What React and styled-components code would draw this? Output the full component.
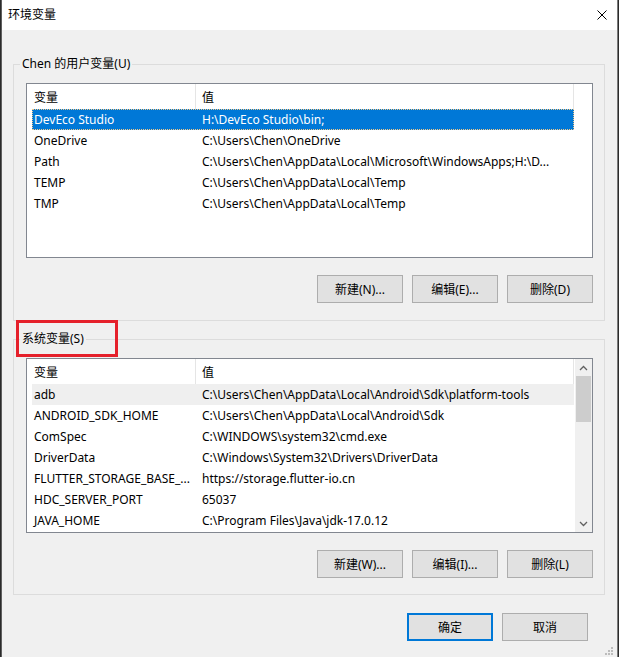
import React from "react";
import styled, { createGlobalStyle, css } from "styled-components";

const GlobalStyle = createGlobalStyle`
  html, body {
    margin: 0;
    padding: 0;
    background: #2b2b2b;
    overflow: hidden;
  }
  body {
    font-family: "Noto Sans", "Noto Sans CJK SC", sans-serif;
    font-size: 12px;
    color: #000;
  }
`;

const Window = styled.div`
  margin-left: 1px;
  width: 615px;
  height: 657px;
  background: #f0f0f0;
  border-left: 1px solid #5f5f5f;
  border-right: 1px solid #7a7a7a;
  display: flex;
  flex-direction: column;
  position: relative;
`;

const TitleBar = styled.div`
  height: 30px;
  background: #fff;
  display: flex;
  align-items: center;
  justify-content: space-between;
  padding: 0 10px 0 6px;
`;

const Title = styled.span`
  font-size: 12px;
  line-height: 16px;
`;

const CloseIcon = styled.svg`
  width: 10px;
  height: 10px;
  margin-top: -1px;
`;

const Content = styled.div`
  padding: 34px 12px 0 11px;
  display: flex;
  flex-direction: column;
`;

const GroupBox = styled.section`
  border: 1px solid #dcdcdc;
  padding: 0 11px ${(p) => p.$bottom}px 12px;
  margin-top: ${(p) => p.$top}px;
  display: flex;
  flex-direction: column;
`;

/* group caption sits on the top border, like a win32 group box */
const Legend = styled.div`
  position: relative;
  margin: -9px 0 11px -6px;
  padding: 0 2px;
  width: fit-content;
  line-height: 16px;
  height: 16px;
  background: #f0f0f0;
`;

const RedMark = styled.div`
  position: absolute;
  left: -4px;
  top: -11px;
  width: 102px;
  height: 37px;
  border: 3px solid #e5202b;
  box-sizing: border-box;
  pointer-events: none;
`;

const ListBox = styled.div`
  height: 175px;
  box-sizing: border-box;
  border: 1px solid #828790;
  background: #fff;
  display: flex;
  overflow: hidden;
`;

const ListInner = styled.div`
  flex: 1;
  display: flex;
  flex-direction: column;
  padding-left: 5px;
`;

const HeaderRow = styled.div`
  display: flex;
  height: 25px;
  width: 542px;
`;

const HeaderCell = styled.div`
  display: flex;
  align-items: center;
  box-sizing: border-box;
  border-right: 1px solid #e5e5e5;
  ${(p) =>
    p.$first
      ? css`
          width: 164px;
          padding-left: 2px;
        `
      : css`
          flex: 1;
          padding-left: 6px;
        `}
`;

const Row = styled.div`
  display: flex;
  align-items: center;
  height: 21px;
  width: 542px;
  box-sizing: border-box;
  white-space: nowrap;
  ${(p) =>
    p.$selected &&
    css`
      background: #0078d7;
      color: #fff;
      outline: 1px dotted #f2c98a;
      outline-offset: -1px;
    `}
  ${(p) =>
    p.$hover &&
    css`
      background: #efefef;
    `}
`;

const NameCell = styled.div`
  width: 164px;
  padding-left: 2px;
  box-sizing: border-box;
  overflow: hidden;
`;

const ValueCell = styled.div`
  flex: 1;
  padding-left: 6px;
  overflow: hidden;
`;

const ScrollBar = styled.div`
  width: 17px;
  background: #f0f0f0;
  display: flex;
  flex-direction: column;
`;

const ScrollArrow = styled.div`
  height: 17px;
  display: flex;
  align-items: center;
  justify-content: center;
`;

const ScrollTrack = styled.div`
  flex: 1;
  padding: 0 1px;
`;

const ScrollThumb = styled.div`
  height: 46px;
  background: #cdcdcd;
`;

const ButtonRow = styled.div`
  display: flex;
  justify-content: flex-end;
  gap: 9px;
  margin-top: 17px;
`;

const Button = styled.button`
  width: 86px;
  height: 28px;
  box-sizing: border-box;
  background: #e1e1e1;
  border: 1px solid #adadad;
  font-family: inherit;
  font-size: 12px;
  color: #000;
  padding: 0;
  ${(p) =>
    p.$default &&
    css`
      border: 2px solid #0078d7;
    `}
`;

const Footer = styled.div`
  display: flex;
  justify-content: flex-end;
  gap: 9px;
  margin-top: 18px;
  padding-right: 29px;
`;

const Grip = styled.svg`
  position: absolute;
  right: 3px;
  bottom: 1px;
  width: 10px;
  height: 10px;
`;

const userVars = [
  ["DevEco Studio", "H:\\DevEco Studio\\bin;"],
  ["OneDrive", "C:\\Users\\Chen\\OneDrive"],
  ["Path", "C:\\Users\\Chen\\AppData\\Local\\Microsoft\\WindowsApps;H:\\D..."],
  ["TEMP", "C:\\Users\\Chen\\AppData\\Local\\Temp"],
  ["TMP", "C:\\Users\\Chen\\AppData\\Local\\Temp"],
];

const systemVars = [
  ["adb", "C:\\Users\\Chen\\AppData\\Local\\Android\\Sdk\\platform-tools"],
  ["ANDROID_SDK_HOME", "C:\\Users\\Chen\\AppData\\Local\\Android\\Sdk"],
  ["ComSpec", "C:\\WINDOWS\\system32\\cmd.exe"],
  ["DriverData", "C:\\Windows\\System32\\Drivers\\DriverData"],
  ["FLUTTER_STORAGE_BASE_...", "https://storage.flutter-io.cn"],
  ["HDC_SERVER_PORT", "65037"],
  ["JAVA_HOME", "C:\\Program Files\\Java\\jdk-17.0.12"],
];

const Chevron = ({ up }) => (
  <svg width="9" height="6" viewBox="0 0 9 6">
    <path
      d={up ? "M1 5 L4.5 1.5 L8 5" : "M1 1 L4.5 4.5 L8 1"}
      fill="none"
      stroke="#606060"
      strokeWidth="1.3"
    />
  </svg>
);

const VarList = ({ items, selected, hover, scroll }) => (
  <ListBox>
    <ListInner>
      <HeaderRow>
        <HeaderCell $first>变量</HeaderCell>
        <HeaderCell>值</HeaderCell>
      </HeaderRow>
      {items.map(([name, value], i) => (
        <Row key={name} $selected={i === selected} $hover={i === hover}>
          <NameCell>{name}</NameCell>
          <ValueCell>{value}</ValueCell>
        </Row>
      ))}
    </ListInner>
    {scroll && (
      <ScrollBar>
        <ScrollArrow>
          <Chevron up />
        </ScrollArrow>
        <ScrollTrack>
          <ScrollThumb />
        </ScrollTrack>
        <ScrollArrow>
          <Chevron />
        </ScrollArrow>
      </ScrollBar>
    )}
  </ListBox>
);

export default function App() {
  return (
    <>
      <GlobalStyle />
      <Window>
        <TitleBar>
          <Title>环境变量</Title>
          <CloseIcon viewBox="0 0 10 10">
            <path d="M0.5 0.5 L9.5 9.5 M9.5 0.5 L0.5 9.5" stroke="#000" strokeWidth="1" />
          </CloseIcon>
        </TitleBar>
        <Content>
          <GroupBox $top={0} $bottom={17}>
            <Legend>Chen 的用户变量(U)</Legend>
            <VarList items={userVars} selected={0} />
            <ButtonRow>
              <Button>新建(N)...</Button>
              <Button>编辑(E)...</Button>
              <Button>删除(D)</Button>
            </ButtonRow>
          </GroupBox>
          <GroupBox $top={18} $bottom={16}>
            <Legend>
              系统变量(S)
              <RedMark />
            </Legend>
            <VarList items={systemVars} hover={0} scroll />
            <ButtonRow>
              <Button>新建(W)...</Button>
              <Button>编辑(I)...</Button>
              <Button>删除(L)</Button>
            </ButtonRow>
          </GroupBox>
        </Content>
        <Footer>
          <Button $default>确定</Button>
          <Button>取消</Button>
        </Footer>
        <Grip viewBox="0 0 10 10">
          {[
            [7, 1],
            [4, 4],
            [7, 4],
            [1, 7],
            [4, 7],
            [7, 7],
          ].map(([x, y]) => (
            <rect key={`${x}-${y}`} x={x} y={y} width="2" height="2" fill="#bcbcbc" />
          ))}
        </Grip>
      </Window>
    </>
  );
}
